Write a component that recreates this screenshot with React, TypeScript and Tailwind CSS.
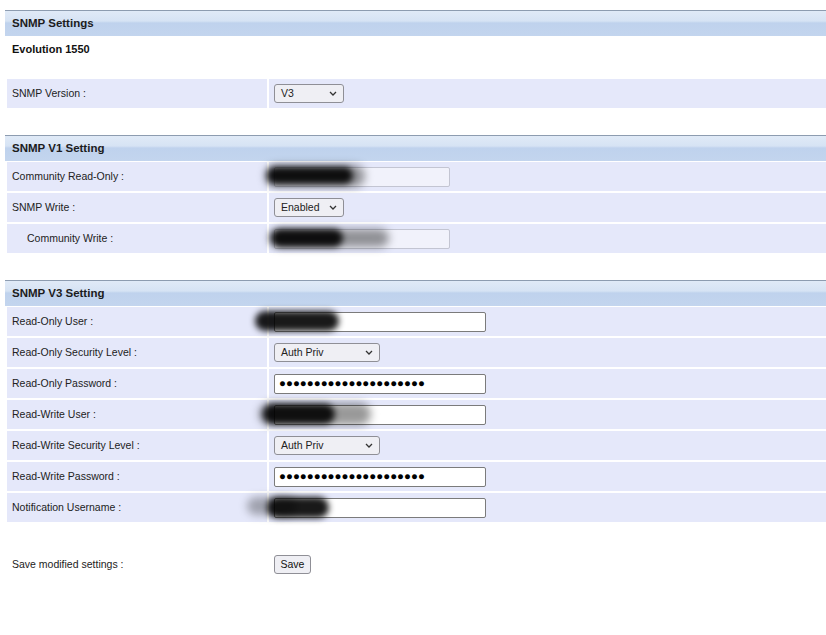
import React from "react";

const font = { fontFamily: '"Liberation Sans", Arial, sans-serif' };

function SectionHeader({ title }: { title: string }) {
  return (
    <div className="h-[26px] border-t border-[#8d9cb0] bg-[linear-gradient(to_bottom,#e0eaf7_0%,#d6e3f4_40%,#bfd2ed_48%,#c3d5ee_100%)] pl-[7px] flex items-center">
      <span className="text-[11.5px] font-bold text-[#1c1c1c]">{title}</span>
    </div>
  );
}

function Smudge({ className }: { className: string }) {
  return <div className={`pointer-events-none absolute rounded-full ${className}`} />;
}

function Row({
  label,
  indent,
  children,
}: {
  label: string;
  indent?: boolean;
  children?: React.ReactNode;
}) {
  return (
    <div className="flex h-[29px] gap-[2px]">
      <div
        className={`w-[260px] shrink-0 bg-[#e5e8fa] flex items-center pt-[1px] text-[10.5px] text-[#222] ${
          indent ? "pl-[20px]" : "pl-[5px]"
        }`}
      >
        {label}
      </div>
      <div className="relative flex-1 bg-[#e5e8fa] flex items-center pl-[5px]">{children}</div>
    </div>
  );
}

function Select({ value, width }: { value: string; width: string }) {
  return (
    <div
      className={`${width} h-[19px] flex items-center justify-between rounded-[3px] border border-[#8f8f96] bg-[#efeff4] pl-[6px] pr-[6px] text-[10.5px] text-[#222]`}
    >
      <span>{value}</span>
      <svg width="8" height="5" viewBox="0 0 8 5" fill="none">
        <path d="M1 1l3 3 3-3" stroke="#333" strokeWidth="1.3" />
      </svg>
    </div>
  );
}

function TextBox({ disabled }: { disabled?: boolean }) {
  return disabled ? (
    <div className="w-[176px] h-[20px] rounded-[2px] border border-[#c3c5d2] bg-[#f1f2fb]" />
  ) : (
    <div className="w-[212px] h-[20px] rounded-[2px] border border-[#7b7b7b] bg-white" />
  );
}

function Password() {
  return (
    <div className="w-[212px] h-[20px] rounded-[2px] border border-[#7b7b7b] bg-white flex items-center pl-[4px] overflow-hidden">
      <span className="text-[11.5px] leading-none text-black">{"●".repeat(21)}</span>
    </div>
  );
}

export default function App() {
  return (
    <div className="min-h-[635px] bg-white pt-[10px] pl-[5px]" style={font}>
      <SectionHeader title="SNMP Settings" />
      <div className="h-[43px] pl-[7px] pt-[5px] text-[11px] font-bold text-[#111]">Evolution 1550</div>

      <div className="pl-[2px]">
        <Row label="SNMP Version :">
          <Select value="V3" width="w-[70px]" />
        </Row>
      </div>

      <div className="mt-[27px]">
        <SectionHeader title="SNMP V1 Setting" />
      </div>
      <div className="pl-[2px] pt-[1px] flex flex-col gap-[2px]">
        <Row label="Community Read-Only :">
          <TextBox disabled />
          <Smudge className="left-[-4px] top-[3px] w-[100px] h-[22px] bg-black/40 blur-[4px]" />
          <Smudge className="left-[-2px] top-[5px] w-[86px] h-[17px] bg-black/90 blur-[3px]" />
        </Row>
        <Row label="SNMP Write :">
          <Select value="Enabled" width="w-[70px]" />
        </Row>
        <Row label="Community Write :" indent>
          <TextBox disabled />
          <Smudge className="left-[0px] top-[5px] w-[120px] h-[18px] bg-black/40 blur-[4px]" />
          <Smudge className="left-[2px] top-[5px] w-[72px] h-[18px] bg-black/90 blur-[3px]" />
        </Row>
      </div>

      <div className="mt-[27px]">
        <SectionHeader title="SNMP V3 Setting" />
      </div>
      <div className="pl-[2px] pt-[1px] flex flex-col gap-[2px]">
        <Row label="Read-Only User :">
          <TextBox />
          <Smudge className="left-[-14px] top-[4px] w-[84px] h-[20px] bg-black/90 blur-[3px]" />
        </Row>
        <Row label="Read-Only Security Level :">
          <Select value="Auth Priv" width="w-[106px]" />
        </Row>
        <Row label="Read-Only Password :">
          <Password />
        </Row>
        <Row label="Read-Write User :">
          <TextBox />
          <Smudge className="left-[-10px] top-[3px] w-[112px] h-[22px] bg-black/40 blur-[4px]" />
          <Smudge className="left-[-6px] top-[4px] w-[72px] h-[20px] bg-black/90 blur-[3px]" />
        </Row>
        <Row label="Read-Write Security Level :">
          <Select value="Auth Priv" width="w-[106px]" />
        </Row>
        <Row label="Read-Write Password :">
          <Password />
        </Row>
        <Row label="Notification Username :">
          <TextBox />
          <Smudge className="left-[-22px] top-[4px] w-[50px] h-[18px] bg-black/30 blur-[4px]" />
          <Smudge className="left-[-2px] top-[4px] w-[62px] h-[21px] bg-black/90 blur-[3px]" />
        </Row>
      </div>

      <div className="mt-[28px] pl-[2px] flex h-[29px] gap-[2px]">
        <div className="w-[260px] shrink-0 flex items-center pt-[1px] pl-[5px] text-[10.5px] text-[#222]">
          Save modified settings :
        </div>
        <div className="flex-1 flex items-center pl-[5px]">
          <button className="h-[19px] w-[37px] rounded-[3px] border border-[#8f8f96] bg-[#efeff4] text-[10.5px] text-[#111]">
            Save
          </button>
        </div>
      </div>
    </div>
  );
}
